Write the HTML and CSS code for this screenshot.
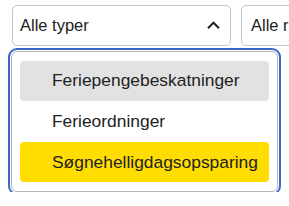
FILE: index.html
```html
<!DOCTYPE html>
<html>
<head>
  <meta charset="utf-8">
  <title>Filter</title>
  <link rel="stylesheet" href="styles.css">
</head>
<body>
  <div class="page">
    <div class="filters">
      <div class="select open">
        <span class="select-value">Alle typer</span>
        <svg class="chevron" width="13" height="8" viewBox="0 0 13 8">
          <path d="M1 7.2 L6.5 1.7 L12 7.2" fill="none" stroke="#222" stroke-width="2"/>
        </svg>
      </div>
      <div class="select region">
        <span class="select-value">Alle regioner</span>
      </div>
    </div>
    <ul class="listbox">
      <li class="option hover">Feriepengebeskatninger</li>
      <li class="option">Ferieordninger</li>
      <li class="option selected">Søgnehelligdagsopsparing</li>
    </ul>
  </div>
</body>
</html>
```

FILE: styles.css
```css
html, body {
    margin: 0;
    background-color: #fff;
    overflow: hidden;
}
body {
    font-family: "Liberation Sans", Arial, sans-serif;
    font-size: 16px;
    color: #222;
}
.page {
    padding: 5px 0 0 11px;
    width: 400px;
}
.filters {
    display: flex;
    gap: 10px;
    margin-left: 1px;
}
.select {
    box-sizing: border-box;
    display: flex;
    align-items: center;
    justify-content: space-between;
    height: 41px;
    width: 219px;
    padding: 0 10px 1px 7px;
    border: 1px solid #c4c4c4;
    border-radius: 5px;
    flex-shrink: 0;
    font-size: 16.5px;
}
.select.region { padding-left: 9px; }
.select-value {
    white-space: nowrap;
}
.chevron {
    display: block;
}
.listbox {
    box-sizing: border-box;
    list-style: none;
    margin: 5px 0 0 0;
    width: 267px;
    height: 141px;
    padding: 9px 8px;
    border: 1px solid #b5b5b5;
    border-radius: 6px;
    outline: 2px solid #3a68c4;
    outline-offset: 1px;
    display: flex;
    flex-direction: column;
    gap: 1px;
}
.option {
    height: 40px;
    display: flex;
    align-items: center;
    padding-left: 32px;
    border-radius: 4px;
    white-space: nowrap;
    font-size: 17.4px;
}
.option.hover { background-color: #e2e2e2; }
.option.selected { background-color: #ffdd00; }
```
